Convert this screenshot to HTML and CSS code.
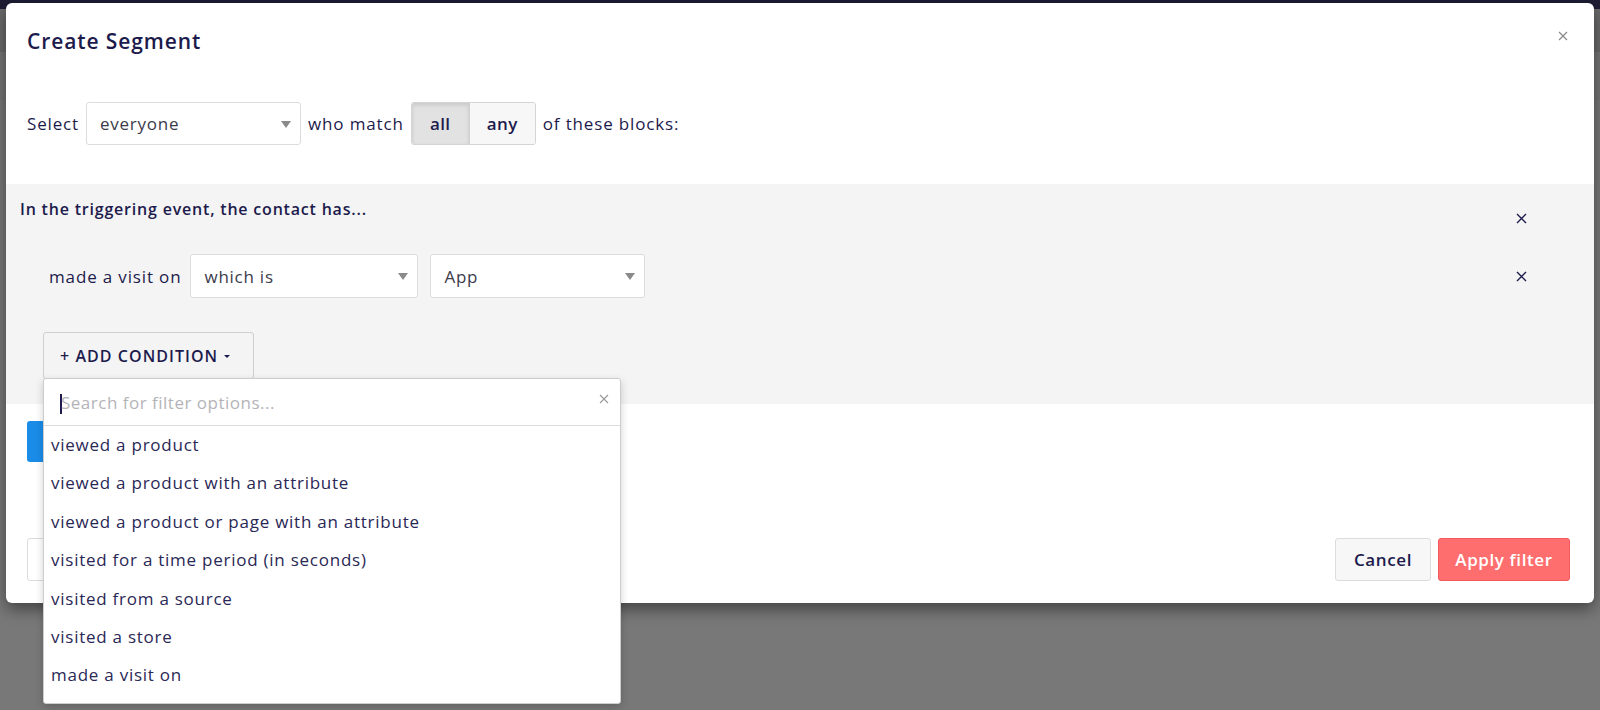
FILE: index.html
```html
<!DOCTYPE html>
<html lang="en">
<head>
    <meta charset="UTF-8">
    <meta name="viewport" content="width=device-width, initial-scale=1.0">
    <title>Create Segment</title>
    <link rel="stylesheet" href="styles.css">
</head>
<body>
    <div class="modal">
        <div class="modal_header">
            <h2>Create Segment</h2>
            <span class="close">
                <svg width="10" height="10" viewBox="0 0 10 10"><path d="M1 1L9 9M9 1L1 9" stroke="#8a8a8a" stroke-width="1.2"/></svg>
            </span>
        </div>

        <div class="select_row">
            <span>Select</span>
            <div class="select select-who">everyone<span class="caret"></span></div>
            <span>who match</span>
            <div class="toggle">
                <button class="toggle_btn active">all</button>
                <button class="toggle_btn">any</button>
            </div>
            <span>of these blocks:</span>
        </div>

        <div class="block">
            <div class="block_head">
                <p>In the triggering event, the contact has...</p>
                <svg class="remove" width="11" height="11" viewBox="0 0 11 11"><path d="M1 1L10 10M10 1L1 10" stroke="#1d1b4c" stroke-width="1.4"/></svg>
            </div>
            <div class="condition">
                <span class="condition_label">made a visit on</span>
                <div class="select select-op">which is<span class="caret"></span></div>
                <div class="select select-val">App<span class="caret"></span></div>
                <svg class="remove remove-row" width="11" height="11" viewBox="0 0 11 11"><path d="M1 1L10 10M10 1L1 10" stroke="#1d1b4c" stroke-width="1.4"/></svg>
            </div>
            <div class="add_wrap">
                <button class="btn-add">+ ADD CONDITION<span class="mini_caret"></span></button>
                <div class="dropdown">
                    <div class="search">
                        <span class="cursor"></span>
                        <span class="placeholder">Search for filter options...</span>
                        <svg class="search_clear" width="10" height="10" viewBox="0 0 10 10"><path d="M1 1L9 9M9 1L1 9" stroke="#9a9a9a" stroke-width="1.1"/></svg>
                    </div>
                    <ul class="options">
                        <li>viewed a product</li>
                        <li>viewed a product with an attribute</li>
                        <li>viewed a product or page with an attribute</li>
                        <li>visited for a time period (in seconds)</li>
                        <li>visited from a source</li>
                        <li>visited a store</li>
                        <li>made a visit on</li>
                    </ul>
                </div>
            </div>
        </div>

        <div class="block_actions">
            <button class="btn-block" aria-label="Add block"></button>
        </div>

        <div class="modal_footer">
            <button class="btn-save" aria-label="Save segment"></button>
            <div class="footer_right">
                <button class="btn-cancel">Cancel</button>
                <button class="btn-apply">Apply filter</button>
            </div>
        </div>
    </div>
</body>
</html>
```

FILE: styles.css
```css
*{
    margin:0;
    padding:0;
    box-sizing: border-box;
}
body {
    height: 710px;
    overflow: hidden;
    font-family: "Open Sans", "Liberation Sans", sans-serif;
    font-size: 17px;
    letter-spacing: 0.75px;
    color: #1d1b4c;
    background: linear-gradient(#1c1c34 0, #1c1c34 9px, #6a6a6a 9px, #6a6a6a 52px, #747474 52px, #747474 100px, #787878 100px);
    padding: 3px 0 0 6px;
}
button {
    font-family: inherit;
    letter-spacing: inherit;
    cursor: pointer;
}
.modal {
    width: 1588px;
    height: 600px;
    background-color: #fff;
    border-radius: 6px;
    box-shadow: 0 6px 16px rgba(0, 0, 0, 0.45);
    display: flex;
    flex-direction: column;
}
.modal_header {
    display: flex;
    justify-content: space-between;
    align-items: flex-start;
    padding: 25px 26px 0 21px;
}
h2 {
    font-size: 21px;
    line-height: 26px;
    font-weight: 600;
    letter-spacing: 0.9px;
}
.close {
    display: block;
    margin-top: 3px;
    height: 10px;
}
.close svg {
    display: block;
}
.select_row {
    display: flex;
    align-items: center;
    gap: 7px;
    height: 43px;
    margin-top: 48px;
    padding-left: 21px;
    letter-spacing: 0.85px;
}
.select {
    position: relative;
    height: 43px;
    display: flex;
    align-items: center;
    padding-left: 13px;
    background-color: #fff;
    border: 1px solid #dcdcdc;
    border-radius: 3px;
    color: #3b3b4a;
    letter-spacing: 0.75px;
}
.select-who {
    width: 215px;
}
.select-op {
    width: 228px;
}
.select-val {
    width: 215px;
}
.caret {
    position: absolute;
    right: 9px;
    top: 18px;
    border-left: 5px solid transparent;
    border-right: 5px solid transparent;
    border-top: 7px solid #8a8a8a;
}
.toggle {
    display: flex;
    height: 43px;
    border: 1px solid #d4d4d4;
    border-radius: 3px;
    overflow: hidden;
}
.toggle_btn {
    border: none;
    background-color: #f7f7f7;
    font-size: 17px;
    font-weight: 600;
    letter-spacing: 0.4px;
    color: #1d1b4c;
    width: 65px;
}
.toggle_btn.active {
    width: 58px;
    background-color: #e2e2e2;
    border-right: 1px solid #d0d0d0;
    box-shadow: inset 0 2px 4px rgba(0, 0, 0, 0.12);
}
.block {
    margin-top: 39px;
    height: 220px;
    background-color: #f4f4f4;
    padding: 14px 67px 0 14px;
}
.block_head {
    display: flex;
    justify-content: space-between;
    align-items: flex-start;
    height: 22px;
}
.block_head p {
    font-size: 16px;
    line-height: 22px;
    font-weight: 600;
    letter-spacing: 0.8px;
}
.remove {
    display: block;
    margin-top: 15px;
}
.condition {
    display: flex;
    align-items: center;
    height: 44px;
    margin-top: 34px;
    padding-left: 29px;
}
.condition_label {
    margin-right: 9px;
    letter-spacing: 0.85px;
}
.select-op, .select-val {
    height: 44px;
}
.select-val {
    margin-left: 12px;
}
.remove-row {
    margin: 0 0 0 auto;
}
.add_wrap {
    position: relative;
    display: inline-block;
    margin: 34px 0 0 23px;
}
.btn-add {
    display: flex;
    align-items: center;
    width: 211px;
    height: 47px;
    border: 1px solid #cfcfcf;
    border-radius: 3px;
    background-color: #f4f4f4;
    color: #1d1b4c;
    font-size: 16px;
    font-weight: 600;
    letter-spacing: 1.05px;
    padding-left: 16px;
}
.mini_caret {
    display: inline-block;
    margin-left: 6px;
    margin-top: 1px;
    border-left: 3px solid transparent;
    border-right: 3px solid transparent;
    border-top: 3px solid #1d1b4c;
}
.dropdown {
    position: absolute;
    top: 46px;
    left: 0;
    width: 578px;
    height: 326px;
    background-color: #fff;
    border: 1px solid #cdcdcd;
    border-radius: 3px;
    box-shadow: 0 3px 8px rgba(0, 0, 0, 0.18);
    overflow: hidden;
    z-index: 5;
}
.search {
    position: relative;
    display: flex;
    align-items: center;
    height: 47px;
    border-bottom: 1px solid #dcdcdc;
    padding-left: 16px;
}
.cursor {
    width: 2px;
    height: 20px;
    background-color: #1d1b4c;
    margin-top: 3px;
}
.placeholder {
    color: #b4b4b8;
    margin-left: -1px;
    letter-spacing: 0.5px;
}
.search_clear {
    position: absolute;
    right: 11px;
    top: 15px;
}
.options {
    list-style: none;
}
.options li {
    height: 38.4px;
    line-height: 38.4px;
    padding-left: 7px;
    color: #2a2856;
}
.block_actions {
    margin-top: 17px;
    padding-left: 21px;
}
.btn-block {
    display: block;
    height: 41px;
    width: 150px;
    border: none;
    border-radius: 3px;
    background-color: #1a8ce8;
}
.modal_footer {
    display: flex;
    justify-content: space-between;
    margin-top: 76px;
    padding: 0 24px 0 21px;
}
.btn-save {
    height: 43px;
    width: 150px;
    border: 1px solid #dcdcdc;
    border-radius: 3px;
    background-color: #fff;
}
.footer_right {
    display: flex;
    gap: 7px;
}
.btn-cancel {
    width: 96px;
    height: 43px;
    border: 1px solid #dcdcdc;
    border-radius: 3px;
    background-color: #f7f7f8;
    color: #1d1b4c;
    font-size: 17px;
    font-weight: 600;
    letter-spacing: 0.6px;
}
.btn-apply {
    width: 132px;
    height: 43px;
    border: 1px solid #f45a5a;
    border-radius: 3px;
    background-color: #ff6e6e;
    color: #fff;
    font-size: 17px;
    font-weight: 600;
    letter-spacing: 0.6px;
}
```
